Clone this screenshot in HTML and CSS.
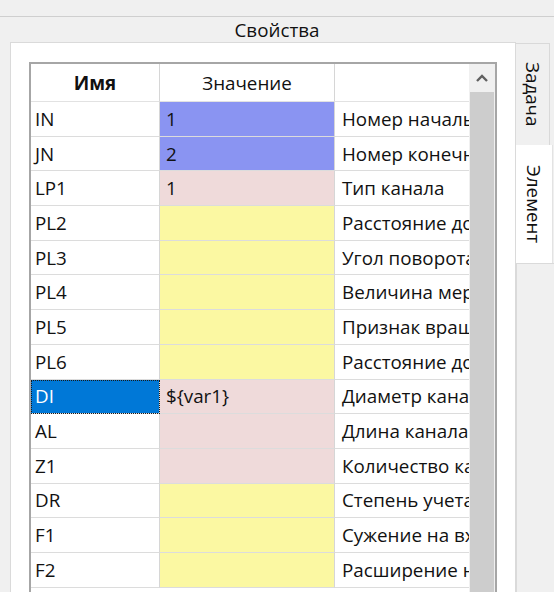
FILE: index.html
```html
<!DOCTYPE html>
<html lang="ru">
<head>
<meta charset="utf-8">
<title>Свойства</title>
<link rel="stylesheet" href="styles.css">
</head>
<body>
<div class="topbar"></div>
<div class="title">Свойства</div>
<div class="main">
  <div class="panel">
    <div class="grid">
      <div class="table">
        <div class="row head">
          <div class="c name"><b>Имя</b></div>
          <div class="c val">Значение</div>
          <div class="c desc"></div>
        </div>
        <div class="row"><div class="c name">IN</div><div class="c val blue">1</div><div class="c desc">Номер начального узла</div></div>
        <div class="row"><div class="c name">JN</div><div class="c val blue">2</div><div class="c desc">Номер конечного узла</div></div>
        <div class="row"><div class="c name">LP1</div><div class="c val pink">1</div><div class="c desc">Тип канала</div></div>
        <div class="row"><div class="c name">PL2</div><div class="c val yellow"></div><div class="c desc">Расстояние до начала</div></div>
        <div class="row"><div class="c name">PL3</div><div class="c val yellow"></div><div class="c desc">Угол поворота</div></div>
        <div class="row"><div class="c name">PL4</div><div class="c val yellow"></div><div class="c desc">Величина меридиана</div></div>
        <div class="row"><div class="c name">PL5</div><div class="c val yellow"></div><div class="c desc">Признак вращения</div></div>
        <div class="row"><div class="c name">PL6</div><div class="c val yellow"></div><div class="c desc">Расстояние до конца</div></div>
        <div class="row"><div class="c name sel">DI</div><div class="c val pink">${var1}</div><div class="c desc">Диаметр канала</div></div>
        <div class="row"><div class="c name">AL</div><div class="c val pink"></div><div class="c desc">Длина канала</div></div>
        <div class="row"><div class="c name">Z1</div><div class="c val pink"></div><div class="c desc">Количество каналов</div></div>
        <div class="row"><div class="c name">DR</div><div class="c val yellow"></div><div class="c desc">Степень учета</div></div>
        <div class="row"><div class="c name">F1</div><div class="c val yellow"></div><div class="c desc">Сужение на входе</div></div>
        <div class="row"><div class="c name">F2</div><div class="c val yellow"></div><div class="c desc">Расширение на выходе</div></div>
      </div>
      <div class="scrollbar">
        <div class="arrow">
          <svg width="14" height="10" viewBox="0 0 14 10"><polyline points="2,8 7,3 12,8" fill="none" stroke="#606060" stroke-width="2.4"/></svg>
        </div>
        <div class="thumb"></div>
      </div>
    </div>
  </div>
  <div class="tabs">
    <div class="tab">Задача</div>
    <div class="tab active">Элемент</div>
    <div class="tabrest"></div>
  </div>
</div>
</body>
</html>
```
FILE: styles.css
```css
html, body {
  margin: 0;
  padding: 0;
}
body {
  width: 554px;
  height: 592px;
  overflow: hidden;
  background: #f0f0f0;
  font-family: "Open Sans", "Noto Sans", sans-serif;
  font-size: 18.8px;
  color: #111;
}
.topbar {
  height: 16px;
  border-bottom: 1px solid #cfcfcf;
}
.title {
  height: 25px;
  line-height: 27px;
  text-align: center;
}
.main {
  display: flex;
  height: 550px;
}
.panel {
  box-sizing: border-box;
  margin-left: 10px;
  width: 506px;
  height: 560px;
  background: #fff;
  border: 1px solid #dadada;
  padding: 19px 18px 0 18px;
}
.grid {
  display: flex;
  border: 2px solid #a6a6a6;
  border-bottom: none;
  height: 540px;
  overflow: hidden;
}
.table {
  width: 438px;
  flex: none;
}
.row {
  display: grid;
  grid-template-columns: 129px 175px 134px;
  height: 34.7px;
}
.row.head {
  height: 38px;
}
.c {
  box-sizing: border-box;
  border-bottom: 1px solid #dcdcdc;
  white-space: nowrap;
  overflow: hidden;
  display: flex;
  align-items: center;
  padding-left: 4px;
}
.name {
  border-right: 1px solid #d6d6d6;
}
.val {
  border-right: 1px solid #d6d6d6;
  padding-left: 6px;
}
.desc {
  padding-left: 7px;
}
.head .c {
  justify-content: center;
  padding-left: 0;
  background: #fff;
  border-bottom: 1px solid #e2e2e2;
}
.head .name b {
  font-weight: 700;
}
.blue { background: #8a94f2; }
.pink { background: #efdada; }
.yellow { background: #fbf8a2; }
.sel {
  background: #0078d7;
  color: #fff;
  outline: 1px dotted #1a1a1a;
  outline-offset: -1px;
}
.scrollbar {
  width: 26px;
  flex: none;
  background: #f0f0f0;
  display: flex;
  flex-direction: column;
  align-items: center;
}
.arrow {
  height: 28px;
  display: flex;
  align-items: center;
  justify-content: center;
  width: 100%;
}
.thumb {
  width: 24px;
  flex: 1;
  background: #cdcdcd;
}
.tabs {
  width: 38px;
  display: flex;
  flex-direction: column;
  padding-top: 1px;
}
.tab {
  box-sizing: border-box;
  writing-mode: vertical-rl;
  display: flex;
  align-items: center;
  justify-content: center;
  width: 34px;
  height: 102px;
  background: #f0f0f0;
  border: 1px solid #d9d9d9;
  border-left: none;
  border-bottom: none;
}
.tab.active {
  width: 37px;
  height: 118px;
  background: #fff;
  border: none;
  border-right: 1px solid #e3e3e3;
}
.tabrest {
  flex: 1;
  border-top: 1px solid #dadada;
  border-left: 1px solid #dadada;
  background: #f0f0f0;
}
```
